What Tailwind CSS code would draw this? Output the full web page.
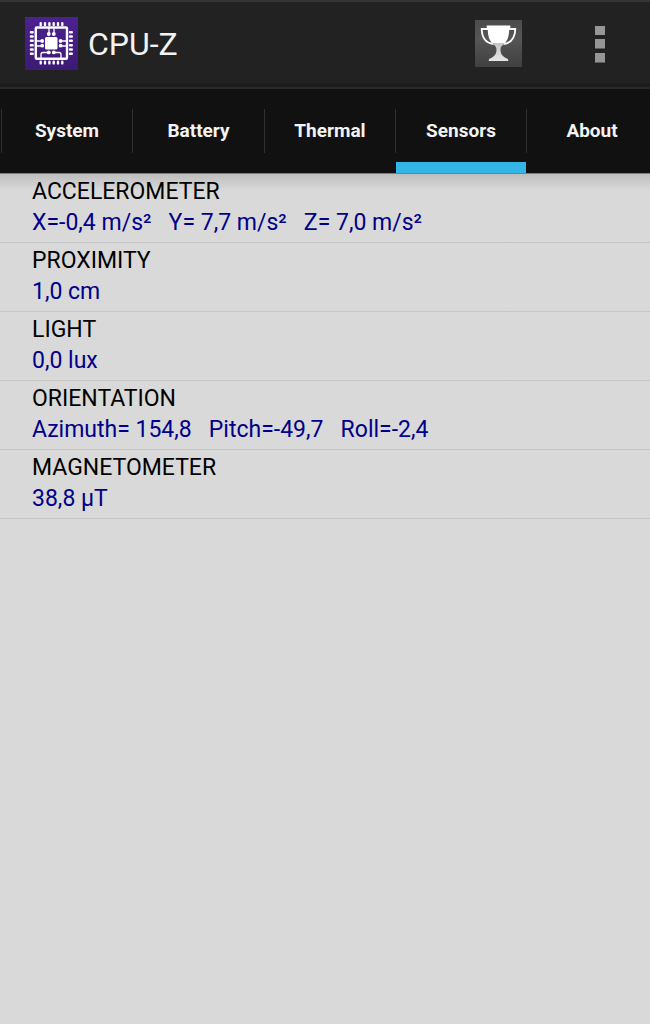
<!DOCTYPE html>
<html lang="en">
<head>
<meta charset="utf-8">
<meta name="viewport" content="width=device-width, initial-scale=1">
<title>CPU-Z</title>
<script src="https://cdn.jsdelivr.net/npm/@tailwindcss/browser@4"></script>
</head>
<body class="min-h-screen bg-[#d9d9d9] font-[Roboto,sans-serif] overflow-x-hidden">
<header class="flex h-[89px] items-center border-t-2 border-b-2 border-t-[#353535] border-b-[#292929] bg-[#222222] pr-9 pb-[2px] pl-6 shadow-[inset_0_-4px_0_#1c1c1c]">
  <svg class="size-[54px] shrink-0" viewBox="0 0 54 54" aria-hidden="true">
    <defs><linearGradient id="p" x1="0" y1="0" x2="0" y2="1"><stop offset="0" stop-color="#4c2191"/><stop offset="1" stop-color="#3d1a74"/></linearGradient></defs>
    <rect x="1" y="0" width="53" height="53" fill="url(#p)"/>
    <g fill="none" stroke="#fff">
      <rect x="11.800" y="10.500" width="31.200" height="31.200" rx="1" stroke-width="2.400"/>
      <path stroke-width="2.400" stroke-linecap="round" d="M16.700 6.300v1.600M21 6.300v1.600M25.400 6.300v1.600M29.700 6.300v1.600M34 6.300v1.600M38.300 6.300v1.600M16.700 44.800v1.600M21 44.800v1.600M25.400 44.800v1.600M29.700 44.800v1.600M34 44.800v1.600M38.300 44.800v1.600M6.900 15.200h1.800M6.900 19.500h1.800M6.900 23.800h1.800M6.900 28.200h1.800M6.900 32.500h1.800M6.900 36.800h1.800M46 15.200h1.800M46 19.500h1.800M46 23.800h1.800M46 28.200h1.800M46 32.500h1.800M46 36.800h1.800"/>
      <path stroke-width="1.300" d="M25 11v6M30 11v6M12 24h6M12 29h6M37 24h6M37 29h6M25 35.500h-6q-2 0-2 2v4M30 35.500h5q2 0 2 2v4"/>
    </g>
    <g fill="#fff"><rect x="21" y="20" width="12.500" height="12.500" rx="1.500"/><circle cx="24.800" cy="17" r="1.900"/><circle cx="29.800" cy="17" r="1.900"/><circle cx="18.200" cy="24" r="1.900"/><circle cx="18.200" cy="28.700" r="1.900"/><circle cx="36.600" cy="24" r="1.900"/><circle cx="36.600" cy="28.700" r="1.900"/><circle cx="24.800" cy="35.400" r="1.900"/><circle cx="29.800" cy="35.400" r="1.900"/></g>
  </svg>
  <h1 class="ml-[10px] text-[32px] leading-10 font-normal text-[#f3f3f3]">CPU-Z</h1>
  <button type="button" aria-label="Ranking" class="mr-[64px] ml-auto">
    <svg class="block size-[47px]" viewBox="0 0 47 47" aria-hidden="true">
      <defs>
        <linearGradient id="b" x1="0" y1="0" x2="0" y2="1"><stop offset="0" stop-color="#4c4c4c"/><stop offset="0.400" stop-color="#565656"/><stop offset="1" stop-color="#404040"/></linearGradient>
        <linearGradient id="s" x1="0" y1="0" x2="0" y2="1"><stop offset="0" stop-color="#c4c4c4"/><stop offset="1" stop-color="#e6e6e6"/></linearGradient>
      </defs>
      <rect width="47" height="47" fill="url(#b)"/>
      <path fill="none" stroke="#fff" stroke-width="1.800" d="M13 9H6.700c.2 8 4 14 11.800 15M34 9h6.300c-.2 8-4 14-11.800 15"/>
      <path fill="#fff" d="M11.700 5.400h23.600v2.400l-1 .8c-.2 6-1 11-4.300 14.400H17c-3.300-3.400-4.100-8.400-4.300-14.400l-1-.8z"/>
      <path fill="url(#s)" d="M17 23h13c-1.200 1.500-4.500 2.700-4.500 6.500 0 5 2.500 7.500 7 9.200q.8.400.8 2.300H13.700q0-1.900.8-2.300c4.500-1.700 7-4.200 7-9.200 0-3.800-3.300-5-4.500-6.500z"/>
    </svg>
  </button>
  <button type="button" aria-label="More options" class="flex w-[28px] justify-center">
    <svg class="block h-[38px] w-[10px]" viewBox="0 0 10 38" aria-hidden="true"><path fill="#969696" d="M0 1h10v9H0zM0 14h10v9.500H0zM0 28h10v9.500H0z"/></svg>
  </button>
</header>
<nav aria-label="Sections" class="flex h-[85px] overflow-hidden border-b border-[#7e7e7e] bg-[#111111] pl-px text-[19px] font-bold text-[#f3f3f3]">
  <a href="#system" class="flex w-[131px] shrink-0 items-center"><span class="h-11 w-px bg-[#303030]"></span><span class="flex-1 text-center">System</span></a>
  <a href="#battery" class="flex w-[132px] shrink-0 items-center"><span class="h-11 w-px bg-[#303030]"></span><span class="flex-1 text-center">Battery</span></a>
  <a href="#thermal" class="flex w-[131px] shrink-0 items-center"><span class="h-11 w-px bg-[#303030]"></span><span class="flex-1 text-center">Thermal</span></a>
  <a href="#sensors" aria-current="page" class="flex w-[131px] shrink-0 items-center"><span class="h-11 w-px bg-[#303030]"></span><span class="flex h-full flex-1 items-center justify-center shadow-[inset_0_-11px_0_#33b5e5]">Sensors</span></a>
  <a href="#about" class="flex w-[131px] shrink-0 items-center"><span class="h-11 w-px bg-[#303030]"></span><span class="flex-1 text-center">About</span></a>
</nav>
<main class="bg-linear-to-b from-[#bdbdbd] to-[#d9d9d9] to-[16px]">
  <dl class="text-[23px] leading-[31px] text-black">
    <div class="border-b border-[#c5c5c5] pt-[2px] pb-1 pl-8"><dt>ACCELEROMETER</dt><dd class="whitespace-pre-wrap text-[#00008b]">X=-0,4 m/s²   Y= 7,7 m/s²   Z= 7,0 m/s²</dd></div>
    <div class="border-b border-[#c5c5c5] pt-[2px] pb-1 pl-8"><dt>PROXIMITY</dt><dd class="text-[#00008b]">1,0 cm</dd></div>
    <div class="border-b border-[#c5c5c5] pt-[2px] pb-1 pl-8"><dt>LIGHT</dt><dd class="text-[#00008b]">0,0 lux</dd></div>
    <div class="border-b border-[#c5c5c5] pt-[2px] pb-1 pl-8"><dt>ORIENTATION</dt><dd class="whitespace-pre-wrap text-[#00008b]">Azimuth= 154,8   Pitch=-49,7   Roll=-2,4</dd></div>
    <div class="border-b border-[#c5c5c5] pt-[2px] pb-1 pl-8"><dt>MAGNETOMETER</dt><dd class="text-[#00008b]">38,8 µT</dd></div>
  </dl>
</main>
</body>
</html>
